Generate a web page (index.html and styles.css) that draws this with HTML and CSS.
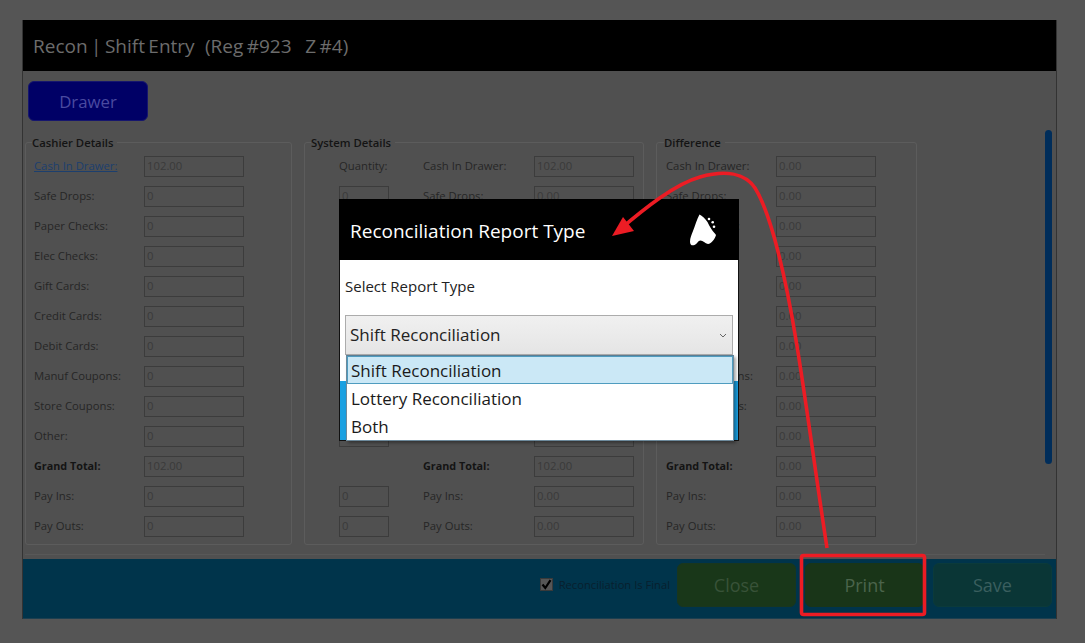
FILE: index.html
```html
<!DOCTYPE html>
<html lang="en">
<head>
<meta charset="utf-8">
<title>Recon | Shift Entry</title>
<link rel="stylesheet" href="styles.css">
</head>
<body>
<div class="window">
  <header class="titlebar">Recon | Shift Entry&nbsp;&nbsp; (Reg #923&nbsp;&nbsp;&nbsp; Z #4)</header>
  <main class="main">
    <div class="content">
      <button class="drawer-btn">Drawer</button>
      <div class="panels">
        <section class="panel panel-cashier">
          <h2 class="panel-title">Cashier Details</h2>
          <div class="grid">
            <a class="lbl link">Cash In Drawer:</a><span class="val">102.00</span>
            <span class="lbl">Safe Drops:</span><span class="val">0</span>
            <span class="lbl">Paper Checks:</span><span class="val">0</span>
            <span class="lbl">Elec Checks:</span><span class="val">0</span>
            <span class="lbl">Gift Cards:</span><span class="val">0</span>
            <span class="lbl">Credit Cards:</span><span class="val">0</span>
            <span class="lbl">Debit Cards:</span><span class="val">0</span>
            <span class="lbl">Manuf Coupons:</span><span class="val">0</span>
            <span class="lbl">Store Coupons:</span><span class="val">0</span>
            <span class="lbl">Other:</span><span class="val">0</span>
            <b class="lbl">Grand Total:</b><span class="val">102.00</span>
            <span class="lbl">Pay Ins:</span><span class="val">0</span>
            <span class="lbl">Pay Outs:</span><span class="val">0</span>
          </div>
        </section>
        <section class="panel panel-system">
          <h2 class="panel-title">System Details</h2>
          <div class="grid">
            <span class="lbl">Quantity:</span><span class="lbl">Cash In Drawer:</span><span class="val">102.00</span>
            <span class="val">0</span><span class="lbl">Safe Drops:</span><span class="val">0.00</span>
            <span class="val">0</span><span class="lbl">Paper Checks:</span><span class="val">0.00</span>
            <span class="val">0</span><span class="lbl">Elec Checks:</span><span class="val">0.00</span>
            <span class="val">0</span><span class="lbl">Gift Cards:</span><span class="val">0.00</span>
            <span class="val">0</span><span class="lbl">Credit Cards:</span><span class="val">0.00</span>
            <span class="val">0</span><span class="lbl">Debit Cards:</span><span class="val">0.00</span>
            <span class="val">0</span><span class="lbl">Manuf Coupons:</span><span class="val">0.00</span>
            <span class="val">0</span><span class="lbl">Store Coupons:</span><span class="val">0.00</span>
            <span class="val">0</span><span class="lbl">Other:</span><span class="val">0.00</span>
            <span></span><b class="lbl">Grand Total:</b><span class="val">102.00</span>
            <span class="val">0</span><span class="lbl">Pay Ins:</span><span class="val">0.00</span>
            <span class="val">0</span><span class="lbl">Pay Outs:</span><span class="val">0.00</span>
          </div>
        </section>
        <section class="panel panel-diff">
          <h2 class="panel-title">Difference</h2>
          <div class="grid">
            <span class="lbl">Cash In Drawer:</span><span class="val">0.00</span>
            <span class="lbl">Safe Drops:</span><span class="val">0.00</span>
            <span class="lbl">Paper Checks:</span><span class="val">0.00</span>
            <span class="lbl">Elec Checks:</span><span class="val">0.00</span>
            <span class="lbl">Gift Cards:</span><span class="val">0.00</span>
            <span class="lbl">Credit Cards:</span><span class="val">0.00</span>
            <span class="lbl">Debit Cards:</span><span class="val">0.00</span>
            <span class="lbl">Manuf Coupons:</span><span class="val">0.00</span>
            <span class="lbl">Store Coupons:</span><span class="val">0.00</span>
            <span class="lbl">Other:</span><span class="val">0.00</span>
            <b class="lbl">Grand Total:</b><span class="val">0.00</span>
            <span class="lbl">Pay Ins:</span><span class="val">0.00</span>
            <span class="lbl">Pay Outs:</span><span class="val">0.00</span>
          </div>
        </section>
      </div>
    </div>
    <div class="scrollbar"></div>
  </main>
  <footer class="footer">
    <label class="final">
      <span class="check"><svg width="13" height="13" viewBox="0 0 13 13"><path d="M2.500 6.500 L5.300 10 L10.500 2.200" fill="none" stroke="#000" stroke-width="2.200"/></svg></span>
      Reconciliation Is Final
    </label>
    <button class="foot-btn btn-close">Close</button>
    <button class="foot-btn btn-print">Print</button>
    <button class="foot-btn btn-save">Save</button>
  </footer>
</div>

<div class="modal">
  <div class="modal-head">
    <span>Reconciliation Report Type</span>
    <svg class="bell" width="32" height="34" viewBox="0 0 32 34">
      <path d="M11.500 .5 C9 5 7 12 5 17 C3.500 21 2 24 2 27.700 C2 31 4 32 6.500 31 C9 30 10 26.500 12.500 26.500 C15 26.500 17 29.500 20 30 C23.500 29.500 27 25 28 21 C27 19 25 18 24 16 C22 13 20.500 10 19.500 8 C17.500 5 14 1.500 11.500 .5 Z" fill="#fff"/>
      <circle cx="21" cy="5" r="1.300" fill="#fff"/>
      <circle cx="24.700" cy="8.300" r="1.300" fill="#fff"/>
      <circle cx="26" cy="12.700" r="1.300" fill="#fff"/>
    </svg>
  </div>
  <div class="modal-body">
    <p class="modal-label">Select Report Type</p>
    <div class="combo">
      <span class="combo-text">Shift Reconciliation</span>
      <svg width="8" height="5" viewBox="0 0 8 5"><path d="M1 1 L4 4 L7 1" fill="none" stroke="#666" stroke-width="1"/></svg>
    </div>
  </div>
  <div class="modal-foot"></div>
  <ul class="dropdown">
    <li class="opt opt-active">Shift Reconciliation</li>
    <li class="opt">Lottery Reconciliation</li>
    <li class="opt">Both</li>
  </ul>
</div>

<svg class="annotation" width="1085" height="643" viewBox="0 0 1085 643">
  <path d="M827 548 C815 470 806 400 796 340 C787 285 772 215 755 188 C745 173 725 170 700 177 C675 184 645 208 618 231" fill="none" stroke="#ec1c24" stroke-width="3.600"/>
  <path d="M612 236 L623 217 L634 231 Z" fill="#ec1c24"/>
  <rect x="801.500" y="555.500" width="123" height="59" rx="2" fill="none" stroke="#ec1c24" stroke-width="3.600"/>
</svg>
</body>
</html>
```
FILE: styles.css
```css
* { box-sizing: border-box; }
html, body { margin: 0; padding: 0; }
body {
  width: 1085px;
  height: 643px;
  overflow: hidden;
  background: #555555;
  padding: 20px 28px 0 22px;
  font-family: "Open Sans", "Noto Sans", sans-serif;
}
.window {
  width: 1035px;
  height: 599px;
  display: flex;
  flex-direction: column;
  border-left: 1px solid #333;
  border-right: 1px solid #333;
  background: #505050;
}
.titlebar {
  height: 51px;
  flex: none;
  background: #000;
  color: #6c6c6c;
  font-size: 19px;
  word-spacing: -1.500px;
  line-height: 53px;
  padding-left: 10px;
  white-space: nowrap;
}
.main {
  flex: 1;
  display: flex;
  min-height: 0;
}
.content {
  flex: 1;
  padding: 10px 0 0 2px;
}
.drawer-btn {
  display: block;
  width: 120px;
  height: 40px;
  margin-left: 3px;
  padding-top: 2px;
  background: #000066;
  border: 1px solid #16166e;
  border-radius: 6px;
  color: #4a4aa0;
  font: 16.800px "Open Sans", sans-serif;
}
.panels {
  display: flex;
  gap: 12px;
  margin-top: 21px;
  padding-bottom: 9px;
  border-bottom: 1px solid #585858;
  height: 413px;
}
.panel {
  height: 403px;
  border: 1px solid #5c5c5c;
  border-radius: 3px;
  padding-bottom: 7px;
}
.panel-cashier { width: 267px; padding-left: 8px; }
.panel-system { width: 340px; padding-left: 34px; }
.panel-diff { width: 261px; padding-left: 9px; }
.panel-title {
  width: fit-content;
  height: 14px;
  margin: -7px 0 6px -2px;
  padding: 0 4px 0 0;
  background: #505050;
  color: #141414;
  font-size: 11.300px;
  font-weight: 600;
  line-height: 14px;
}
.panel-system .panel-title { margin-left: -28px; padding-left: 0; }
.grid {
  display: grid;
  grid-auto-rows: 21px;
  row-gap: 9px;
  align-items: center;
}
.panel-cashier .grid { grid-template-columns: 110px 100px; }
.panel-system .grid { grid-template-columns: 50px 34px 111px 100px; }
.panel-system .grid > :nth-child(3n+1) { grid-column: 1; }
.panel-system .grid > :nth-child(3n+2) { grid-column: 3; }
.panel-system .grid > :nth-child(3n) { grid-column: 4; }
.panel-diff .grid { grid-template-columns: 110px 100px; }
.lbl {
  font-size: 11.300px;
  line-height: 15px;
  padding-bottom: 2px;
  color: #262626;
  white-space: nowrap;
}
b.lbl { color: #141414; font-weight: 700; font-size: 10.800px; }
.link { color: #1c3f6e; text-decoration: underline; padding-bottom: 0; margin-bottom: 2px; }
.val {
  height: 21px;
  border: 1px solid #3c3c3c;
  font-size: 11.300px;
  line-height: 18px;
  padding-left: 2px;
  color: #3a3a3a;
}
.scrollbar {
  flex: none;
  width: 7px;
  height: 334px;
  margin: 59px 4px 0 0;
  border-radius: 4px;
  background: #002d5a;
}
.footer {
  flex: none;
  height: 60px;
  background: #00344b;
  display: flex;
  align-items: center;
  justify-content: flex-end;
  gap: 9px;
  padding: 0 4px 8px 0;
  border-bottom: 1px solid #1c3f50;
}
.final {
  display: flex;
  align-items: center;
  gap: 6px;
  margin-right: -2px;
  font-size: 11.200px;
  white-space: nowrap;
  color: #08202e;
}
.check {
  width: 13px;
  height: 13px;
  border: 1px solid #3a3a3a;
  background: #565656;
  display: flex;
}
.check svg { margin: -1px; }
.foot-btn {
  width: 119px;
  height: 44px;
  border-radius: 6px;
  font: 18px "Open Sans", sans-serif;
}
.btn-close { background: #193719; border: 1px solid #19361e; color: #385238; }
.btn-print { background: #193518; border: 1px solid #193518; color: #4b644b; }
.btn-save { background: #0a3636; border: 1px solid #0b3a3a; color: #3a5f5f; }

.modal {
  position: absolute;
  left: 339px;
  top: 199px;
  width: 400px;
  height: 242px;
  display: flex;
  flex-direction: column;
  background: #fff;
  border-left: 1px solid #111;
  border-right: 1px solid #111;
}
.modal-head {
  flex: none;
  height: 61px;
  margin: 0 -1px;
  background: #000;
  color: #fff;
  font-size: 19px;
  display: flex;
  align-items: center;
  justify-content: space-between;
  padding: 3px 19px 0 11px;
}
.modal-body { flex: 1; padding: 0 5px; }
.modal-label {
  margin: 16px 0 19px;
  font-size: 15px;
  line-height: 20px;
  color: #222;
}
.combo {
  height: 40px;
  border: 1px solid #acacac;
  background: linear-gradient(#f0f0f0, #e5e5e5);
  display: flex;
  align-items: center;
  justify-content: space-between;
  padding: 0 5px 0 4px;
  font-size: 17px;
  color: #222;
}
.combo-text { margin-bottom: 1px; }
.modal-foot {
  flex: none;
  height: 60px;
  background: #1ba1e2;
  border-bottom: 1px solid #111;
}
.dropdown {
  position: absolute;
  left: 6px;
  top: 156px;
  width: 388px;
  height: 86px;
  margin: 0;
  padding: 0;
  list-style: none;
  background: #fff;
  border: 1px solid #6d8a9c;
  border-top-color: #5a7d94;
  box-shadow: 2px 2px 3px rgba(0,0,0,.35);
}
.opt {
  height: 28px;
  padding-left: 3px;
  font-size: 17px;
  line-height: 27px;
  color: #1a1a1a;
  border: 1px solid transparent;
}
.opt-active { background: #cbe8f6; border-color: #4f9cbf; }
.annotation {
  position: absolute;
  left: 0;
  top: 0;
  pointer-events: none;
}
```
